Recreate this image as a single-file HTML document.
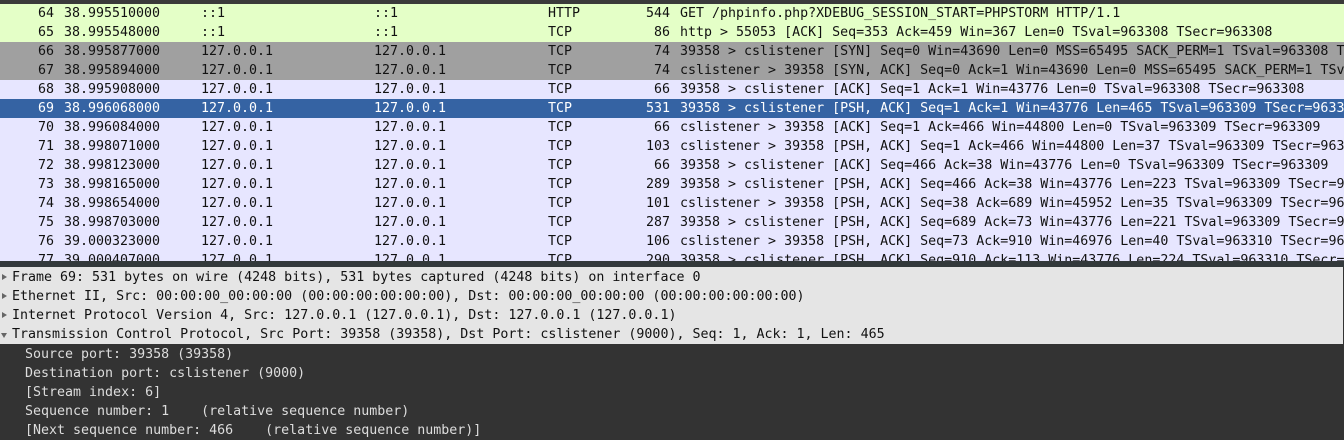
<!DOCTYPE html>
<html><head><meta charset="utf-8"><style>
*{margin:0;padding:0;box-sizing:border-box}
body{width:1344px;height:440px;overflow:hidden;background:#333;font-family:"DejaVu Sans Mono","Liberation Mono",monospace;font-size:13.3px;}
#top{position:absolute;left:0;top:0;width:1344px;height:4px;background:#3a3a3a}
#list{position:absolute;left:0;top:4px;width:1344px;height:257px;overflow:hidden;background:#e7e6ff}
.r{position:relative;height:19px;line-height:19px;white-space:pre;color:#121212}
.r span{position:absolute;top:0}
.n{right:1290px;text-align:right}
.t{left:64px}.s{left:201px}.d{left:374px}.p{left:548px}
.l{right:674px;text-align:right}.i{left:680px}
.g{background:#e4ffc7}.gr{background:#a0a0a0}.sel{background:#3563a3;color:#fff}
#div{position:absolute;left:0;top:261px;width:1344px;height:6px;background:#33393b}
#det{position:absolute;left:0;top:267px;width:1343px;height:77px;background:#e5e5e5;padding-top:1px}
.dr{height:19px;line-height:19px;white-space:pre;color:#111;padding-left:12px;position:relative}
.dr:before{content:"";position:absolute;left:2px;top:6px;border-left:5px solid #666;border-top:3.5px solid transparent;border-bottom:3.5px solid transparent}
.dr.o:before{left:1px;top:8px;border-top:5px solid #666;border-left:3.5px solid transparent;border-right:3.5px solid transparent;border-bottom:0}
#dk{position:absolute;left:0;top:344px;width:1344px;height:96px;background:#333;padding-top:1px}
.kr{height:19px;line-height:19px;white-space:pre;color:#ddd;padding-left:25px}
</style></head><body>
<div id="top"></div>
<div id="list">
<div class="r g"><span class="n">64</span><span class="t">38.995510000</span><span class="s">::1</span><span class="d">::1</span><span class="p">HTTP</span><span class="l">544</span><span class="i">GET /phpinfo.php?XDEBUG_SESSION_START=PHPSTORM HTTP/1.1</span></div>
<div class="r g"><span class="n">65</span><span class="t">38.995548000</span><span class="s">::1</span><span class="d">::1</span><span class="p">TCP</span><span class="l">86</span><span class="i">http &gt; 55053 [ACK] Seq=353 Ack=459 Win=367 Len=0 TSval=963308 TSecr=963308</span></div>
<div class="r gr"><span class="n">66</span><span class="t">38.995877000</span><span class="s">127.0.0.1</span><span class="d">127.0.0.1</span><span class="p">TCP</span><span class="l">74</span><span class="i">39358 &gt; cslistener [SYN] Seq=0 Win=43690 Len=0 MSS=65495 SACK_PERM=1 TSval=963308 TSecr=0</span></div>
<div class="r gr"><span class="n">67</span><span class="t">38.995894000</span><span class="s">127.0.0.1</span><span class="d">127.0.0.1</span><span class="p">TCP</span><span class="l">74</span><span class="i">cslistener &gt; 39358 [SYN, ACK] Seq=0 Ack=1 Win=43690 Len=0 MSS=65495 SACK_PERM=1 TSval=9</span></div>
<div class="r"><span class="n">68</span><span class="t">38.995908000</span><span class="s">127.0.0.1</span><span class="d">127.0.0.1</span><span class="p">TCP</span><span class="l">66</span><span class="i">39358 &gt; cslistener [ACK] Seq=1 Ack=1 Win=43776 Len=0 TSval=963308 TSecr=963308</span></div>
<div class="r sel"><span class="n">69</span><span class="t">38.996068000</span><span class="s">127.0.0.1</span><span class="d">127.0.0.1</span><span class="p">TCP</span><span class="l">531</span><span class="i">39358 &gt; cslistener [PSH, ACK] Seq=1 Ack=1 Win=43776 Len=465 TSval=963309 TSecr=963309</span></div>
<div class="r"><span class="n">70</span><span class="t">38.996084000</span><span class="s">127.0.0.1</span><span class="d">127.0.0.1</span><span class="p">TCP</span><span class="l">66</span><span class="i">cslistener &gt; 39358 [ACK] Seq=1 Ack=466 Win=44800 Len=0 TSval=963309 TSecr=963309</span></div>
<div class="r"><span class="n">71</span><span class="t">38.998071000</span><span class="s">127.0.0.1</span><span class="d">127.0.0.1</span><span class="p">TCP</span><span class="l">103</span><span class="i">cslistener &gt; 39358 [PSH, ACK] Seq=1 Ack=466 Win=44800 Len=37 TSval=963309 TSecr=963309</span></div>
<div class="r"><span class="n">72</span><span class="t">38.998123000</span><span class="s">127.0.0.1</span><span class="d">127.0.0.1</span><span class="p">TCP</span><span class="l">66</span><span class="i">39358 &gt; cslistener [ACK] Seq=466 Ack=38 Win=43776 Len=0 TSval=963309 TSecr=963309</span></div>
<div class="r"><span class="n">73</span><span class="t">38.998165000</span><span class="s">127.0.0.1</span><span class="d">127.0.0.1</span><span class="p">TCP</span><span class="l">289</span><span class="i">39358 &gt; cslistener [PSH, ACK] Seq=466 Ack=38 Win=43776 Len=223 TSval=963309 TSecr=963309</span></div>
<div class="r"><span class="n">74</span><span class="t">38.998654000</span><span class="s">127.0.0.1</span><span class="d">127.0.0.1</span><span class="p">TCP</span><span class="l">101</span><span class="i">cslistener &gt; 39358 [PSH, ACK] Seq=38 Ack=689 Win=45952 Len=35 TSval=963309 TSecr=963309</span></div>
<div class="r"><span class="n">75</span><span class="t">38.998703000</span><span class="s">127.0.0.1</span><span class="d">127.0.0.1</span><span class="p">TCP</span><span class="l">287</span><span class="i">39358 &gt; cslistener [PSH, ACK] Seq=689 Ack=73 Win=43776 Len=221 TSval=963309 TSecr=963309</span></div>
<div class="r"><span class="n">76</span><span class="t">39.000323000</span><span class="s">127.0.0.1</span><span class="d">127.0.0.1</span><span class="p">TCP</span><span class="l">106</span><span class="i">cslistener &gt; 39358 [PSH, ACK] Seq=73 Ack=910 Win=46976 Len=40 TSval=963310 TSecr=963310</span></div>
<div class="r"><span class="n">77</span><span class="t">39.000407000</span><span class="s">127.0.0.1</span><span class="d">127.0.0.1</span><span class="p">TCP</span><span class="l">290</span><span class="i">39358 &gt; cslistener [PSH, ACK] Seq=910 Ack=113 Win=43776 Len=224 TSval=963310 TSecr=963310</span></div>
</div>
<div id="div"></div>
<div id="det">
<div class="dr">Frame 69: 531 bytes on wire (4248 bits), 531 bytes captured (4248 bits) on interface 0</div>
<div class="dr">Ethernet II, Src: 00:00:00_00:00:00 (00:00:00:00:00:00), Dst: 00:00:00_00:00:00 (00:00:00:00:00:00)</div>
<div class="dr">Internet Protocol Version 4, Src: 127.0.0.1 (127.0.0.1), Dst: 127.0.0.1 (127.0.0.1)</div>
<div class="dr o">Transmission Control Protocol, Src Port: 39358 (39358), Dst Port: cslistener (9000), Seq: 1, Ack: 1, Len: 465</div>
</div>
<div id="dk">
<div class="kr">Source port: 39358 (39358)</div>
<div class="kr">Destination port: cslistener (9000)</div>
<div class="kr">[Stream index: 6]</div>
<div class="kr">Sequence number: 1    (relative sequence number)</div>
<div class="kr">[Next sequence number: 466    (relative sequence number)]</div>
</div>
</body></html>
